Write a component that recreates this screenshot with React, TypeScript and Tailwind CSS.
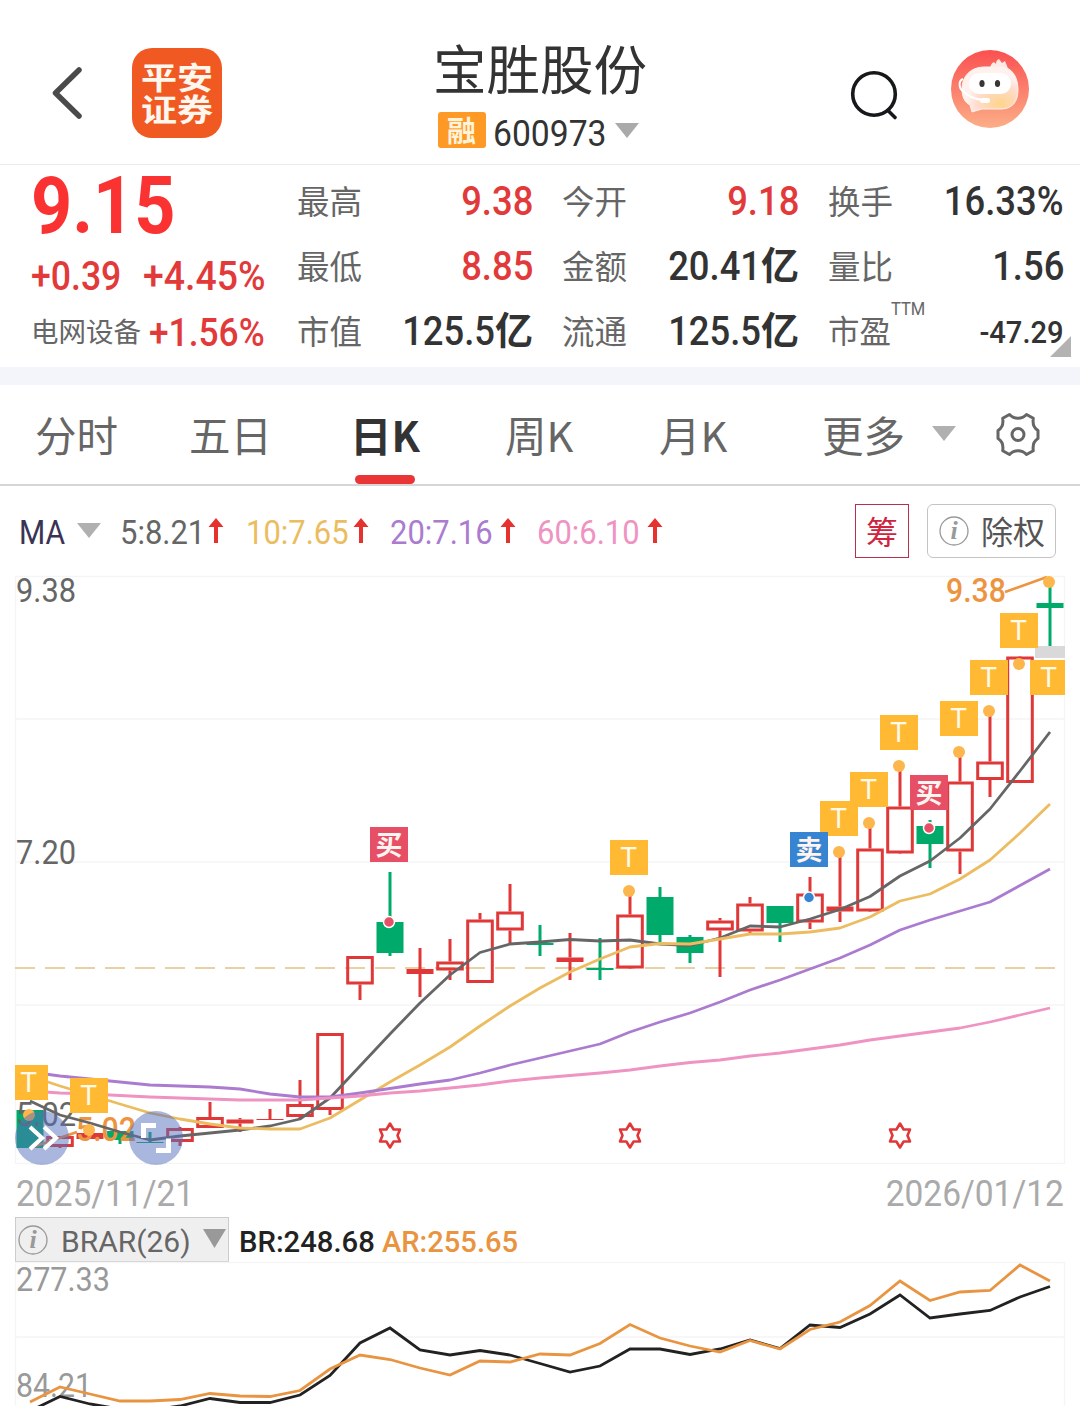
import React from 'react';

const INK = '#333333';
const RED = '#e03838';
const GREEN = '#00aa6b';

const quoteRows = [
    [
        { label: '最高', value: '9.38', red: true },
        { label: '今开', value: '9.18', red: true },
        { label: '换手', value: '16.33%' },
    ],
    [
        { label: '最低', value: '8.85', red: true },
        { label: '金额', value: '20.41', unit: '亿' },
        { label: '量比', value: '1.56' },
    ],
    [
        { label: '市值', value: '125.5', unit: '亿' },
        { label: '流通', value: '125.5', unit: '亿' },
        { label: '市盈', value: '-47.29', ttm: true },
    ],
];

// x, high, body top, body bottom, low, kind
type Candle = [number, number, number, number, number, 'up' | 'flat' | 'down'];
const candles: Candle[] = [
    [30, 1110, 1110, 1148, 1148, 'down'],
    [60, 1136, 1136, 1147, 1148, 'up'],
    [90, 1132, 1133, 1139, 1139, 'flat'],
    [120, 1131, 1131, 1140, 1144, 'down'],
    [150, 1132, 1142, 1143, 1143, 'down'],
    [180, 1127, 1128, 1142, 1146, 'up'],
    [210, 1102, 1117, 1128, 1128, 'up'],
    [240, 1118, 1119.5, 1123.5, 1132, 'flat'],
    [270, 1109, 1119, 1120, 1120, 'flat'],
    [300, 1080, 1104, 1117, 1119, 'up'],
    [330, 1034, 1033, 1110, 1115, 'up'],
    [360, 957, 956, 984.5, 1000, 'up'],
    [390, 872, 922, 953, 956, 'down'],
    [420, 948, 969, 974, 997, 'flat'],
    [450, 939, 961.5, 970.5, 980, 'up'],
    [480, 913, 919.5, 983, 983, 'up'],
    [510, 884, 911.5, 930.5, 944, 'up'],
    [540, 925, 943, 945, 956, 'down'],
    [570, 933, 957.5, 962, 980, 'flat'],
    [600, 938, 968, 970, 980, 'down'],
    [630, 891, 914.5, 968.5, 968, 'up'],
    [660, 887, 897, 935, 942, 'down'],
    [690, 935, 937, 953, 963, 'down'],
    [720, 918, 920.5, 930.5, 977, 'up'],
    [750, 897, 903.5, 931.5, 934, 'up'],
    [780, 906, 906, 923, 942, 'down'],
    [810, 877, 893.5, 922.5, 929, 'up'],
    [840, 852, 906.5, 911.5, 922, 'flat'],
    [870, 823, 848.5, 911.5, 912, 'up'],
    [900, 766, 806.5, 853.5, 853, 'up'],
    [930, 820, 826, 844, 868, 'down'],
    [960, 752, 781.5, 851.5, 874, 'up'],
    [990, 711, 761.5, 780, 797, 'up'],
    [1020, 657, 656.5, 783, 783, 'up'],
    [1050, 580, 603, 608, 646, 'down'],
];

// one value per candle, 30px apart
const ma5 = [1101, 1115, 1123, 1132, 1140, 1136, 1133, 1130, 1126, 1119, 1098, 1066, 1034, 1003, 975, 952.5, 944, 942, 939.5, 941, 940, 944, 945.5, 938, 926, 927, 919, 909.5, 896.5, 876, 861, 838, 809, 771, 732];
const ma10 = [1076, 1086, 1095, 1104, 1113, 1119, 1124, 1128, 1129, 1129, 1118, 1100, 1082, 1065, 1047, 1026, 1006, 988, 972, 959, 947, 943.5, 944, 939, 934, 934, 932, 928, 917, 901, 894, 879, 860, 833, 804];
const ma20 = [1072, 1076, 1079, 1082, 1085, 1086, 1087, 1089, 1094, 1097, 1097, 1093, 1088.5, 1084, 1080, 1073, 1065, 1058, 1051, 1044, 1032, 1022, 1013, 1002, 990, 980, 969, 958, 945, 930, 920, 911, 902, 885.5, 869];
const ma60 = [1091, 1093, 1094, 1095.5, 1097, 1098, 1099, 1100, 1100, 1100, 1098, 1096, 1093, 1091, 1088, 1085, 1081, 1078, 1075.5, 1073, 1070, 1066, 1062.5, 1060, 1056, 1053, 1049, 1045, 1040, 1036, 1032, 1028, 1022, 1015, 1008];
const br = [1411, 1396.5, 1404, 1409, 1410, 1406, 1398.5, 1402.5, 1402.5, 1395, 1375.5, 1343, 1328, 1350, 1355, 1350.5, 1355, 1363.5, 1372, 1366, 1349, 1349, 1354.5, 1349, 1340, 1348.5, 1325, 1327.5, 1314, 1295, 1318, 1314, 1310.5, 1297, 1286.5];
const ar = [1402, 1387, 1394, 1401, 1401, 1399.5, 1393.5, 1396, 1396.5, 1390.5, 1369, 1355, 1359.5, 1368, 1375, 1361, 1362, 1354, 1355, 1343.5, 1324.5, 1338, 1346, 1352, 1340.5, 1349, 1329.5, 1322, 1305.5, 1281, 1300.5, 1292, 1290.5, 1265, 1281];

const toPoints = (ys: number[]) => ys.map((y, i) => `${30 + i * 30},${y}`).join(' ');

const tags: { x: number; y: number; text: string; fill: string }[] = [
    { x: 10, y: 1065, text: 'T', fill: '#ffb932' },
    { x: 70, y: 1078, text: 'T', fill: '#ffb932' },
    { x: 370, y: 827, text: '买', fill: '#e64f65' },
    { x: 610, y: 840, text: 'T', fill: '#ffb932' },
    { x: 820, y: 801, text: 'T', fill: '#ffb932' },
    { x: 790, y: 832, text: '卖', fill: '#3785d2' },
    { x: 850, y: 772, text: 'T', fill: '#ffb932' },
    { x: 880, y: 715, text: 'T', fill: '#ffb932' },
    { x: 910, y: 775, text: '买', fill: '#e64f65' },
    { x: 940, y: 701, text: 'T', fill: '#ffb932' },
    { x: 970, y: 660, text: 'T', fill: '#ffb932' },
    { x: 1000, y: 613, text: 'T', fill: '#ffb932' },
    { x: 1030, y: 660, text: 'T', fill: '#ffb932' },
];

const dots: [number, number][] = [[29, 1115], [89, 1130], [629, 891], [839, 852], [869, 823], [899, 766], [959, 752], [989, 711], [1019, 664], [1049, 582]];

const Triangle: React.FC<{ className?: string; fill?: string }> = ({ className = 'w-6 h-[15px]', fill = '#b0b0b0' }) => (
    <svg className={`shrink-0 ${className}`} viewBox="0 0 24 15" preserveAspectRatio="none">
        <path d="M0 0H24L12 15Z" fill={fill} />
    </svg>
);

const UpArrow: React.FC = () => (
    <svg className="shrink-0" width="16" height="26" viewBox="0 0 16 26">
        <path d="M8 0L15.500 9H10V25H6V9H0.500Z" fill="#e5322f" />
    </svg>
);

const InfoIcon: React.FC = () => (
    <svg className="shrink-0" width="30" height="30" viewBox="0 0 30 30">
        <circle cx="15" cy="15" r="14" fill="none" stroke="#999" strokeWidth="1.3" />
        <text x="15" y="23" textAnchor="middle" fill="#999" fontSize="26" fontWeight="bold" fontStyle="italic" fontFamily="Liberation Serif, serif">i</text>
    </svg>
);

// narrowed digits
const Num: React.FC<{ className?: string; children: React.ReactNode }> = ({ className = 'origin-left scale-x-[.91]', children }) => (
    <span className={`inline-block ${className}`}>{children}</span>
);

const Header: React.FC = () => (
    <header className="flex h-[165px] items-start border-b border-[#ececec] pl-[51px]">
        <svg className="mt-[65px] shrink-0" width="34" height="56" viewBox="0 0 34 56">
            <path d="M28 5L4.500 28L28 51" fill="none" stroke="#4a4a4a" strokeWidth="5.500" strokeLinecap="round" strokeLinejoin="round" />
        </svg>
        <div className="mt-12 ml-[47px] grid h-[90px] w-[90px] shrink-0 place-items-center rounded-[20px] bg-[#f05a22]">
            <div className="-mt-[3px] scale-y-[.84] text-[36px] leading-[38px] font-bold text-[#fff6ee]">
                <div>平安</div>
                <div>证券</div>
            </div>
        </div>
        <div className="flex w-[638px] flex-col items-center">
            <h1 className="mt-9 mr-[2px] text-[53.5px] leading-[62px]">宝胜股份</h1>
            <div className="mt-[11px] mr-[6px] flex items-center">
                <span className="-mt-px grid h-9 w-12 place-items-center rounded-[3px] bg-[#ff9926] text-[29px] leading-[34px] font-bold text-[#fff4da]">
                    <span className="-mt-[2px]">融</span>
                </span>
                <span className="mt-[7px] ml-[7px] w-[122px] font-[Roboto] text-[37px] leading-[36px]"><Num>600973</Num></span>
                <Triangle fill="#aaaaaa" />
            </div>
        </div>
        <svg className="mt-[70px] -ml-[10px] shrink-0" width="48" height="52" viewBox="0 0 48 52">
            <circle cx="24" cy="24" r="21.300" fill="none" stroke="#16181a" strokeWidth="3.600" />
            <path d="M38 40.500L45 47.500" stroke="#16181a" strokeWidth="3.600" strokeLinecap="round" />
        </svg>
        <svg className="mt-[50px] ml-[53px] shrink-0" width="78" height="78" viewBox="0 0 78 78">
            <defs>
                <linearGradient id="botBg" x1="0" y1="0" x2="0" y2="1">
                    <stop offset="0" stopColor="#fa5050" />
                    <stop offset="1" stopColor="#fcae88" />
                </linearGradient>
                <radialGradient id="botHead" cx=".68" cy=".82" r=".6">
                    <stop offset="0" stopColor="#fdd48c" />
                    <stop offset=".7" stopColor="#ffdccf" />
                    <stop offset="1" stopColor="#fff1ee" />
                </radialGradient>
            </defs>
            <circle cx="39" cy="39" r="39" fill="url(#botBg)" />
            <path d="M39 18C40 14 41 13 43 12L45 14C45 11 46 10 48 9L51 13L54 11L56 16L58 21Z" fill="#ffe9e4" />
            <path d="M33 17H50C61 17 67 27 67 40C67 53 60 59 50 59H31L21 62L19 55C13 52 11 46 11 39C11 26 20 17 33 17Z" fill="url(#botHead)" stroke="#fff1ec" strokeWidth="1" />
            <rect x="18" y="23" width="42" height="21" rx="10" fill="#fff" />
            <ellipse cx="31" cy="33.500" rx="2.600" ry="3.600" fill="#3a3433" />
            <ellipse cx="46.500" cy="33.500" rx="2.600" ry="3.600" fill="#3a3433" />
            <path d="M12 29C7 31 8 39 12 41C17 47 23 49 32 50" fill="none" stroke="#fff" strokeWidth="2" />
            <rect x="29" y="48" width="10" height="5" rx="2.500" fill="#fff" />
        </svg>
    </header>
);

const Quote: React.FC = () => (
    <section className="relative flex h-[202px] font-[Roboto,'Noto_Sans_CJK_SC',sans-serif]">
        <div className="w-[297px] shrink-0 pl-[31px] whitespace-nowrap text-[#e23a3a]">
            <div className="pt-px text-[79px] leading-[80px] font-bold text-[#fa3232]"><Num>9.15</Num></div>
            <div className="mt-2 flex text-[40px] leading-[46px] font-medium">
                <span className="w-[112px]"><Num className="origin-left scale-x-[.89]">+0.39</Num></span>
                <Num className="origin-left scale-x-[.935]">+4.45%</Num>
            </div>
            <div className="mt-[9px] flex items-center leading-[46px]">
                <span className="w-[118px] pt-px text-[27.5px] text-[#666]">电网设备</span>
                <Num className="origin-left scale-x-[.93] text-[38px] font-medium">+1.56%</Num>
            </div>
        </div>
        <div className="grid grid-cols-[236px_237px_236px] grid-rows-[65px_65px_65px] gap-x-[29px] pt-1">
            {quoteRows.flat().map((q) => (
                <div key={q.label} className="flex items-center justify-between whitespace-nowrap">
                    <span className={`mt-[3px] flex text-[#666] ${q.ttm ? 'text-[31.5px]' : 'text-[32.5px]'}`}>
                        {q.label}
                        {q.ttm && <span className="-mt-[10px] h-0 origin-left scale-x-[.87] text-[19px] leading-none">TTM</span>}
                    </span>
                    <span className={`flex items-center font-medium ${q.ttm ? 'mt-[3px] text-[31px]' : 'text-[40px]'} ${q.red ? 'text-[#e23a3a]' : 'text-[#333]'}`}>
                        <Num className={q.ttm ? 'origin-right scale-x-[.94]' : 'origin-right scale-x-[.91]'}>{q.value}</Num>
                        {q.unit && <span className="-mt-[2px] text-[38px] leading-none font-bold">{q.unit}</span>}
                    </span>
                </div>
            ))}
        </div>
        <svg className="absolute right-[9px] bottom-[10px]" width="21" height="21" viewBox="0 0 21 21">
            <path d="M21 0V21H0Z" fill="#b3b3b3" />
        </svg>
    </section>
);

const Tabs: React.FC = () => (
    <nav className="flex h-[101px] items-center border-b-2 border-[#d6d6d6] pl-[35px] text-[41.5px] leading-[97px] whitespace-nowrap text-[#666]">
        <span className="w-[154px]">分时</span>
        <span className="w-[161px]">五日</span>
        <span className="relative w-[155px] font-bold text-[#333]">
            日K
            <i className="absolute -bottom-px left-[5px] h-[9px] w-[60px] rounded-full bg-[#e93535]" />
        </span>
        <span className="w-[154px]">周K</span>
        <span className="w-[163px]">月K</span>
        <span className="w-[110px]">更多</span>
        <Triangle className="-mt-[2px] h-[15px] w-6" />
        <svg className="ml-10" width="44" height="45" viewBox="0 0 44 45" fill="none" stroke="#666" strokeWidth="3">
            <path d="M22 6.300Q27 6.300 30.500 2.500L37.300 6.300Q36 15 42 18.500V26.500Q36 30 37.300 38.700L30.500 42.500Q27 38.700 22 38.700Q17 38.700 13.500 42.500L6.700 38.700Q8 30 2 26.500V18.500Q8 15 6.700 6.300L13.500 2.500Q17 6.300 22 6.300Z" strokeLinejoin="round" />
            <circle cx="22" cy="22.500" r="6" />
        </svg>
    </nav>
);

const MaBar: React.FC = () => (
    <div className="flex h-[90px] items-center pl-[19px] font-[Roboto,'Noto_Sans_CJK_SC',sans-serif] text-[34px] whitespace-nowrap">
        <span className="mt-1 w-[58px] text-[33px] text-[#3b3355]"><Num>MA</Num></span>
        <Triangle className="-mt-px h-[15px] w-6" />
        <span className="mt-[2px] ml-[19px] w-[88px] text-[#666]"><Num>5:8.21</Num></span>
        <UpArrow />
        <span className="mt-[2px] ml-[22px] w-[107px] text-[#ecbc60]"><Num>10:7.65</Num></span>
        <UpArrow />
        <span className="mt-[2px] ml-[21px] w-[110px] text-[#ab7bd0]"><Num>20:7.16</Num></span>
        <UpArrow />
        <span className="mt-[2px] ml-[21px] w-[110px] text-[#ee93c2]"><Num>60:6.10</Num></span>
        <UpArrow />
        <span className="ml-[192px] grid h-[54px] w-[54px] place-items-center border border-[#b8304c] text-[32px] leading-none text-[#cf2440]">
            <span className="mt-1">筹</span>
        </span>
        <span className="ml-[18px] flex h-[54px] w-[129px] items-center rounded-md border border-[#c4c4c4] pl-[11px] text-[32px] leading-none text-[#555]">
            <InfoIcon />
            <span className="mt-1 ml-3">除权</span>
        </span>
    </div>
);

const KLineChart: React.FC = () => (
    <div className="relative h-[588px]">
        <svg className="block overflow-visible" width="1080" height="588" viewBox="0 576 1080 588" fontFamily="Roboto, 'Noto Sans CJK SC', sans-serif">
            <clipPath id="plot"><rect x="15" y="576" width="1050" height="588" /></clipPath>
            <path d="M15 576.500H1065M15 719H1065M15 862H1065M15 1005H1065M15 1163.500H1065M15.500 576V1164M1064.500 576V1164" stroke="#f5f5f5" strokeWidth="1.500" />
            <path d="M15 968H1056" stroke="#e8d1a4" strokeWidth="2" strokeDasharray="20 10" />
            {candles.map(([x, hi, top, bottom, lo, kind]) => (
                <g key={x} stroke={kind === 'down' ? GREEN : RED} strokeWidth="3">
                    <path d={`M${x} ${hi}V${top}M${x} ${bottom}V${lo}`} />
                    {kind === 'up'
                        ? <rect x={x - 12.3} y={top + 1.5} width="24.600" height={bottom - top - 3} fill="none" />
                        : <rect x={x - 13.5} y={top} width="27" height={bottom - top} fill={kind === 'down' ? GREEN : RED} stroke="none" />}
                </g>
            ))}
            <g fill="#666" fontSize="34">
                <text x="16" y="602" textLength="60" lengthAdjust="spacingAndGlyphs">9.38</text>
                <text x="16" y="864" textLength="60" lengthAdjust="spacingAndGlyphs">7.20</text>
                <text x="16" y="1126" textLength="60" lengthAdjust="spacingAndGlyphs">5.02</text>
            </g>
            <g fill="#ec9440" fontSize="34" fontWeight="500">
                <text x="946" y="602" textLength="60" lengthAdjust="spacingAndGlyphs">9.38</text>
                <text x="76" y="1141" textLength="60" lengthAdjust="spacingAndGlyphs">5.02</text>
            </g>
            <path d="M1005 592L1047 577M33 1147L77 1132" stroke="#ec9440" strokeWidth="2.500" />
            <g fill="none" strokeWidth="2.800" strokeLinejoin="round">
                <polyline points={toPoints(ma5)} stroke="#666" />
                <polyline points={toPoints(ma10)} stroke="#ecbc60" />
                <polyline points={toPoints(ma20)} stroke="#ab7bd0" />
                <polyline points={toPoints(ma60)} stroke="#ee93c2" />
            </g>
            <rect x="1035" y="646" width="30" height="12" fill="#d9d9d9" />
            {dots.map(([x, y]) => <circle key={x} cx={x} cy={y} r="6" fill="#fdb64b" />)}
            <g stroke="#fff" strokeWidth="1.500">
                <circle cx="389" cy="922" r="5.500" fill="#e64f65" />
                <circle cx="929" cy="828" r="5.500" fill="#e64f65" />
                <circle cx="809" cy="897.500" r="5.500" fill="#3785d2" />
            </g>
            <g clipPath="url(#plot)">
                {tags.map((t) => (
                    <g key={t.x}>
                        <rect x={t.x} y={t.y} width="38" height="35" fill={t.fill} />
                        {t.text === 'T'
                            ? <text x={t.x + 18.5} y={t.y + 27} textAnchor="middle" fontSize="28" fill="#fffaea">T</text>
                            : <text x={t.x + 19} y={t.y + 27.5} textAnchor="middle" fontSize="27" fontWeight="bold" fill="#fff4f0">{t.text}</text>}
                    </g>
                ))}
            </g>
            {[390, 630, 900].map((x) => (
                <path
                    key={x}
                    transform={`translate(${x} 1135.500)`}
                    d="M0 -12L3.600 -6H10L7.500 0L10 6H3.600L0 12L-3.600 6H-10L-7.500 0L-10 -6H-3.600Z"
                    fill="#fff"
                    stroke={RED}
                    strokeWidth="2.600"
                    strokeLinejoin="round"
                />
            ))}
        </svg>
        {/* floating chart controls */}
        <button className="absolute top-[535px] left-[15px] h-[54px] w-[54px] rounded-full bg-[#536dbd]/50">
            <svg width="54" height="54" viewBox="0 0 54 54" fill="none" stroke="#fff" strokeWidth="4.200">
                <path d="M15 16L27 27L15 38M29 16L41 27L29 38" />
            </svg>
        </button>
        <button className="absolute top-[535px] left-[129px] h-[54px] w-[54px] rounded-full bg-[#536dbd]/50">
            <svg width="54" height="54" viewBox="0 0 54 54" fill="none" stroke="#fff" strokeWidth="5">
                <path d="M14.500 27V14.500H27M27 39.500H39.500V27.500" />
            </svg>
        </button>
    </div>
);

const BrarChart: React.FC = () => (
    <svg className="block overflow-visible" width="1080" height="144" viewBox="0 1262 1080 144" fontFamily="Roboto, sans-serif">
        <path d="M15 1262.500H1065M15 1337H1065M15.500 1262V1406M1064.500 1262V1406" stroke="#f5f5f5" strokeWidth="1.500" />
        <g fill="#999" fontSize="34">
            <text x="16" y="1291" textLength="94" lengthAdjust="spacingAndGlyphs">277.33</text>
            <text x="16" y="1397" textLength="76" lengthAdjust="spacingAndGlyphs">84.21</text>
        </g>
        <g fill="none" strokeWidth="2.800">
            <polyline points={toPoints(br)} stroke="#222" />
            <polyline points={toPoints(ar)} stroke="#e89440" />
        </g>
    </svg>
);

const App: React.FC = () => {
    return (
        <div className="h-[1406px] w-[1080px] overflow-hidden bg-white font-['Noto_Sans_CJK_SC',sans-serif]" style={{ color: INK }}>
            <Header />
            <Quote />
            <div className="h-[18px] bg-[#f3f5fa]" />
            <Tabs />
            <MaBar />
            <KLineChart />
            <div className="flex h-[53px] items-center justify-between px-4 pt-[6px] font-[Roboto] text-[37px] text-[#aaa]">
                <Num className="origin-left scale-x-[.905]">2025/11/21</Num>
                <Num className="origin-right scale-x-[.905]">2026/01/12</Num>
            </div>
            <div className="flex h-[45px] items-center pl-[15px] font-[Roboto] text-[30px] whitespace-nowrap">
                <div className="flex h-[45px] w-[214px] items-center border border-[#ccc] bg-[#efefef] pl-[2px] text-[#666]">
                    <InfoIcon />
                    <span className="mt-[3px] ml-[13px] w-[142px]">BRAR(26)</span>
                    <Triangle fill="#999999" className="-mt-[3px] h-[19px] w-[23px]" />
                </div>
                <span className="mt-[3px] ml-[10px] w-[143px] font-medium text-[#222]"><Num className="origin-left scale-x-[.975]">BR:248.68</Num></span>
                <Num className="mt-[3px] origin-left scale-x-[.97] font-medium text-[#e89440]">AR:255.65</Num>
            </div>
            <BrarChart />
        </div>
    );
};

export default App;
